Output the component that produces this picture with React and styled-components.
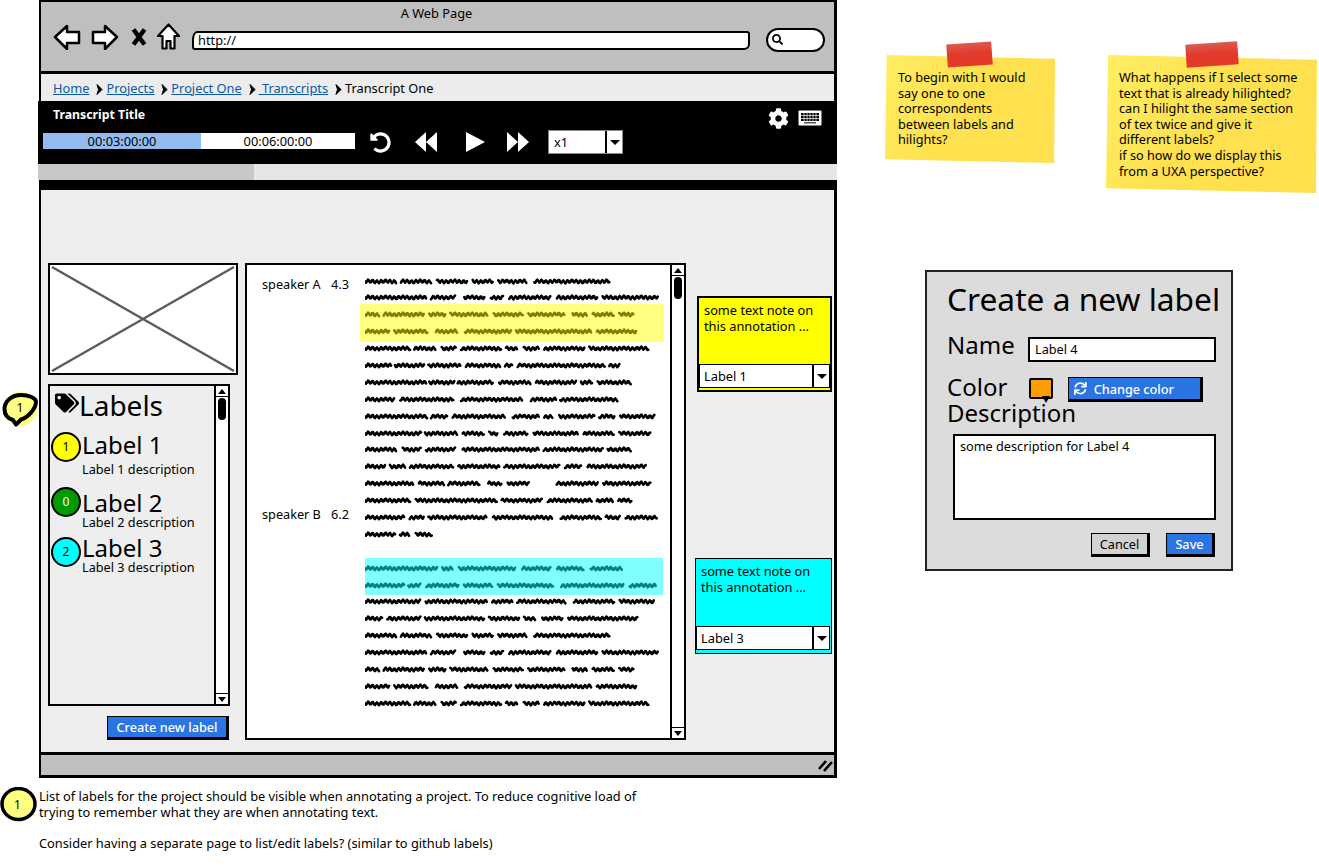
import React from 'react';
import styled, { createGlobalStyle } from 'styled-components';
import { FaCog, FaSearch, FaSync, FaTags, FaUndoAlt } from 'react-icons/fa';

const FONT = '"Noto Sans", "Open Sans", sans-serif';

// word extents of each scribbled line, taken from a 3x crop (so divided by 3 when drawn)
const L = {
  a: [0,93,108,198,216,306,323,383,400,486,508,733],
  b: [0,183,198,270,298,360,378,416,433,558,576,698,713,880],
  c: [0,43,56,178,193,243,256,368,386,473,490,600,623,666,683,748,763,808],
  d: [0,73,88,188,213,278,300,438,453,680,696,813],
  e: [0,136,148,213,230,273,288,410,423,458,476,523,538,658,673,853],
  f: [0,78,90,178,190,288,303,406,420,443,458,720,733,763],
  g: [0,183,193,268,278,383,403,496,513,633,648,683,698,798],
  h: [0,88,106,266,288,473,498,573,586,758],
  i: [0,186,198,248,263,420,443,523,538,563,583,688,703,748,766,870],
  j: [0,168,180,278,293,358,373,398,418,488,506,638,656,748,763,858],
  k: [0,93,113,168,183,270,293,523,536,713,728,798],
  l: [0,60,75,120,135,265,280,405,418,585,600,650,668,843],
  m: [0,145,162,238,250,345,370,410,428,492,575,700,715,858],
  n: [0,137,152,395,410,530,548,680,695,745,760,800],
  o: [0,117,134,177,190,367,384,562,587,707,722,765,782,877],
  p: [0,92,105,132,152,202],
  q: [0,217,232,262,282,452,472,557,577,657,677,772],
  r: [0,117,130,167,184,282,297,382,399,564,589,777,794,872],
  s: [0,167,182,367,382,442,457,602,627,747,764,867],
  t: [0,52,67,167,180,357,372,462,477,512,532,592,610,820],
};

const wavePath = (points) => {
  let d = '';
  for (let i = 0; i < points.length; i += 2) {
    const from = points[i] / 3;
    const to = points[i + 1] / 3;
    for (let x = from; x <= to; x += 1) {
      const y = 8.5 + Math.sin(x * 1.45) * 1.5 - Math.sin(x * 0.37) * 0.4;
      d += `${x === from ? 'M' : 'L'}${x.toFixed(1)} ${y.toFixed(1)}`;
    }
  }
  return d;
};

const Global = createGlobalStyle`
  html, body { margin: 0; padding: 0; background: #fff; }
  body { font-family: ${FONT}; font-size: 12.8px; color: #000; overflow: hidden; }
  * { box-sizing: border-box; }
`;

const Canvas = styled.div`
  display: flex;
  width: 1319px;
  height: 867px;
  padding-left: 39px;
`;

const LeftColumn = styled.div`
  position: relative;
  width: 798px;
`;

const RightColumn = styled.div`
  display: flex;
  flex-direction: column;
  margin-left: 48px;
`;

const Browser = styled.div`
  width: 798px;
  height: 778px;
  border: 3px solid #000;
  border-width: 2px 3px 3px 2px;
  display: flex;
  flex-direction: column;
`;

const TopBar = styled.div`
  height: 72px;
  flex: none;
  background: #bfbfbf;
  border-bottom: 3px solid #000;
  display: flex;
  flex-direction: column;
`;

const PageTitle = styled.div`
  text-align: center;
  font-size: 12.8px;
  line-height: 18px;
  margin-top: 2px;
  padding-right: 2px;
`;

const NavRow = styled.div`
  display: flex;
  align-items: center;
  height: 27px;
  padding-left: 12px;
  margin-top: 1px;
`;

const NavIcon = styled.svg`
  flex: none;
  margin-right: ${(p) => p.$gap}px;
`;

const UrlBar = styled.div`
  width: 558px;
  height: 19px;
  background: #fff;
  border: 2.5px solid #000;
  border-radius: 5px 3px 6px 3px / 9px 3px 6px 3px;
  font-size: 12.8px;
  line-height: 14px;
  padding-left: 4px;
  margin: 7px 16px 0 0;
`;

const SearchPill = styled.div`
  width: 59px;
  height: 24px;
  background: #fff;
  border: 2.5px solid #000;
  border-radius: 12px;
  display: flex;
  align-items: center;
  padding-left: 4px;
  margin-top: 6px;
  font-size: 11px;
`;

const Breadcrumbs = styled.div`
  height: 27px;
  flex: none;
  background: #ececec;
  display: flex;
  align-items: center;
  padding-left: 12px;
  font-size: 12.8px;
  white-space: pre;
`;

const Crumb = styled.a`
  color: #0b5aa5;
  text-decoration: underline;
`;

const Chevron = styled.svg`
  margin: 3px 3px 0 7px;
  flex: none;
`;

const Player = styled.div`
  height: 63px;
  flex: none;
  background: #000;
  color: #fff;
  display: flex;
  flex-direction: column;
  margin: 0 -3px;
`;

const PlayerTop = styled.div`
  display: flex;
  align-items: center;
  justify-content: space-between;
  height: 24px;
  margin-top: 1px;
  padding: 0 15px 0 15px;
`;

const TrackTitle = styled.div`
  font-size: 12.3px;
  font-weight: 700;
  margin-top: 1px;
`;

const PlayerTools = styled.div`
  display: flex;
  align-items: center;
  gap: 9px;
  margin-top: 8px;
  font-size: 21px;
`;

const PlayerControls = styled.div`
  display: flex;
  align-items: center;
  padding-left: 5px;
  margin-top: 4px;
`;

const TimeCell = styled.div`
  width: ${(p) => p.$width}px;
  height: 16px;
  background: ${(p) => p.$bg};
  color: #000;
  font-size: 12.8px;
  line-height: 16px;
  text-align: center;
  margin-bottom: 2px;
`;

const ControlIcon = styled.svg`
  flex: none;
  margin-right: ${(p) => p.$gap}px;
`;

const UndoWrap = styled.div`
  display: flex;
  font-size: 21px;
  margin: 0 23px 0 15px;
`;

const SelectBox = styled.div`
  width: ${(p) => p.$width}px;
  height: 24px;
  flex: none;
  display: flex;
  background: #fff;
  color: #000;
  font-size: 12.8px;
  line-height: 22px;
  border: ${(p) => p.$frame};
`;

const SelectValue = styled.div`
  flex: 1;
  padding-left: ${(p) => p.$pad}px;
`;

const SelectArrow = styled.div`
  width: 17px;
  flex: none;
  border-left: 2px solid #000;
  display: flex;
  align-items: center;
  justify-content: center;
  &::after {
    content: '';
    border-left: 5px solid transparent;
    border-right: 5px solid transparent;
    border-top: 5px solid #000;
  }
`;

const ProgressStrip = styled.div`
  height: 16px;
  flex: none;
  margin: 0 -3px;
  background: #e6e6e6;
  display: flex;
`;

const ProgressFill = styled.div`
  width: 216px;
  background: #c8c8c8;
`;

const BlackRule = styled.div`
  height: 10px;
  flex: none;
  background: #000;
`;

const Content = styled.div`
  height: 562px;
  flex: none;
  background: #eeeeee;
  display: flex;
  padding: 73px 0 12px 7px;
`;

const SideColumn = styled.div`
  width: 190px;
  flex: none;
  display: flex;
  flex-direction: column;
`;

const Placeholder = styled.svg`
  display: block;
  width: 190px;
  height: 112px;
  flex: none;
  background: #fff;
  border: 2.5px solid #000;
`;

const LabelsPanel = styled.div`
  width: 182px;
  height: 322px;
  margin-top: 9px;
  flex: none;
  border: 2.5px solid #000;
  display: flex;
`;

const LabelsBody = styled.div`
  flex: 1;
  padding: 0 0 0 1px;
`;

const LabelsHead = styled.div`
  display: flex;
  align-items: center;
  font-size: 28px;
  line-height: 38px;
  padding-left: 4px;
  svg { font-size: 24px; margin-bottom: 4px; }
`;

const LabelRow = styled.div`
  display: flex;
  margin-top: ${(p) => p.$top}px;
`;

const Dot = styled.div`
  width: 30px;
  height: 30px;
  flex: none;
  border-radius: 50%;
  border: 2px solid #000;
  background: ${(p) => p.$bg};
  color: ${(p) => p.$fg};
  font-size: 12px;
  line-height: 26px;
  text-align: center;
  margin: ${(p) => p.$top}px 1px 0 0;
`;

const LabelName = styled.div`
  font-size: 24px;
  line-height: ${(p) => p.$height}px;
`;

const LabelDesc = styled.div`
  font-size: 12.7px;
  line-height: 17px;
  margin-top: ${(p) => p.$top}px;
`;

const Scrollbar = styled.div`
  width: 14px;
  flex: none;
  background: #fff;
  border-left: 2px solid #000;
  display: flex;
  flex-direction: column;
`;

const ScrollButton = styled.div`
  height: 11px;
  flex: none;
  display: flex;
  align-items: center;
  justify-content: center;
  border: 1.5px solid #000;
  border-width: ${(p) => (p.$down ? '1.5px 0 0 0' : '0 0 1.5px 0')};
  margin-top: ${(p) => (p.$down ? 'auto' : '0')};
  &::after {
    content: '';
    border-left: 4px solid transparent;
    border-right: 4px solid transparent;
    ${(p) => (p.$down ? 'border-top' : 'border-bottom')}: 5px solid #000;
  }
`;

const ScrollThumb = styled.div`
  width: 8px;
  height: 22px;
  border-radius: 4px;
  background: #000;
  margin: 1px 0 0 2px;
`;

const PrimaryButton = styled.div`
  display: flex;
  align-items: center;
  gap: 7px;
  height: ${(p) => p.$height}px;
  width: ${(p) => p.$width}px;
  margin-top: ${(p) => p.$top || 0}px;
  background: #2b75e2;
  color: #fff;
  font-size: 12.7px;
  font-weight: 500;
  justify-content: ${(p) => (p.$start ? 'flex-start' : 'center')};
  padding-left: ${(p) => (p.$start ? 5 : 0)}px;
  border: 1.5px solid #000;
  border-right-width: 3px;
  border-bottom-width: 3px;
  flex: none;
`;

const CreateRow = styled.div`
  display: flex;
  justify-content: flex-end;
  width: 181px;
  margin-top: 10px;
`;

const TranscriptPanel = styled.div`
  width: 441px;
  height: 477px;
  margin-left: 7px;
  flex: none;
  display: flex;
  background: #fff;
  border: 2.5px solid #000;
`;

const TranscriptBody = styled.div`
  flex: 1;
  display: flex;
`;

const SpeakerColumn = styled.div`
  width: 118px;
  flex: none;
  padding: 9px 0 0 15px;
`;

const SpeakerTag = styled.div`
  display: flex;
  justify-content: space-between;
  width: 87px;
  font-size: 12.7px;
  line-height: 18px;
  margin-top: ${(p) => p.$top}px;
`;

const TextColumn = styled.div`
  flex: 1;
  padding-top: 7.5px;
`;

const ScribbleLine = styled.svg`
  display: block;
  width: 304px;
  height: 16.9px;
  margin-bottom: ${(p) => p.$after}px;
`;

const Highlight = styled.div`
  width: ${(p) => p.$width}px;
  padding: 2px 0 2px ${(p) => p.$pad}px;
  margin: -2px 0 -2px ${(p) => p.$left}px;
  background: ${(p) => p.$bg};
`;

const NoteColumn = styled.div`
  flex: 1;
  display: flex;
  flex-direction: column;
  align-items: flex-end;
  padding-right: 2px;
`;

const Note = styled.div`
  width: ${(p) => p.$width}px;
  height: 96px;
  flex: none;
  margin-top: ${(p) => p.$top}px;
  background: ${(p) => p.$bg};
  border: ${(p) => p.$border} solid #000;
  display: flex;
  flex-direction: column;
  font-size: 12.8px;
  line-height: 16px;
`;

const NoteText = styled.div`
  flex: 1;
  padding: 4px 0 0 5px;
`;

const NoteSelect = styled.div`
  padding: 0 0 2px 0;
  margin-bottom: ${(p) => p.$bottom}px;
`;

const BottomBar = styled.div`
  height: 23px;
  flex: none;
  background: #bfbfbf;
  border-top: 3px solid #000;
  display: flex;
  justify-content: flex-end;
  align-items: center;
  padding-right: 1px;
`;

const Annotation = styled.svg`
  position: absolute;
  left: -39px;
  top: 389px;
`;

const Footnote = styled.div`
  position: relative;
  margin: 11px 0 0 0;
  width: 620px;
  font-size: 12.8px;
  line-height: 15.6px;
`;

const FootnoteMark = styled.svg`
  position: absolute;
  left: -39px;
  top: -2px;
`;

const FootnotePara = styled.p`
  margin: 0 0 15.6px 0;
`;

const StickyRow = styled.div`
  display: flex;
  margin-top: 55px;
  align-items: flex-start;
`;

const Sticky = styled.div`
  position: relative;
  width: ${(p) => p.$width}px;
  height: ${(p) => p.$height}px;
  margin-right: ${(p) => p.$gap}px;
  padding: 15px 0 0 13px;
  font-size: 12.7px;
  line-height: 15.6px;
  white-space: pre-line;
  isolation: isolate;
  &::before {
    content: '';
    position: absolute;
    inset: 0;
    z-index: -1;
    background: linear-gradient(120deg, #ffee63 0%, #ffe150 45%, #ffe04e 100%);
    clip-path: polygon(1% 0, 100% 3.5%, 99.5% 100%, 0 96.5%);
  }
`;

const Tape = styled.div`
  position: absolute;
  top: -12px;
  left: ${(p) => p.$left}px;
  width: ${(p) => p.$width}px;
  height: 23px;
  background: linear-gradient(180deg, #dc5a50 0%, #e23b2c 45%, #e5382a 100%);
  transform: rotate(-4deg);
`;

const Dialog = styled.div`
  width: 308px;
  height: 301px;
  margin: 77px 0 0 40px;
  background: #dcdcdc;
  border: 2.5px solid #222;
  padding: 7px 15px 0 20px;
  display: flex;
  flex-direction: column;
`;

const DialogTitle = styled.div`
  font-size: 31.7px;
  line-height: 40px;
  white-space: nowrap;
`;

const FieldLabel = styled.div`
  font-size: 24px;
  line-height: ${(p) => p.$line}px;
  width: ${(p) => p.$width}px;
  flex: none;
`;

const FieldRow = styled.div`
  display: flex;
  align-items: flex-start;
  margin-top: ${(p) => p.$top}px;
`;

const TextInput = styled.div`
  width: 190px;
  height: 25px;
  margin-top: 7px;
  background: #fff;
  border: 2.5px solid #000;
  font-size: 12.7px;
  line-height: 20px;
  padding-left: 5px;
`;

const Swatch = styled.div`
  position: relative;
  width: 24px;
  height: 21px;
  margin: 3px 15px 0 0;
  background: #ff9d00;
  border: 2px solid #000;
  border-radius: 2px;
  &::after {
    content: '';
    position: absolute;
    right: 1px;
    bottom: -6px;
    border-left: 4px solid transparent;
    border-right: 4px solid transparent;
    border-top: 7px solid #000;
  }
`;

const TextArea = styled.div`
  width: 263px;
  height: 86px;
  margin: 10px 0 0 6px;
  background: #fff;
  border: 2.5px solid #000;
  font-size: 12.7px;
  line-height: 16px;
  padding: 2px 0 0 5px;
`;

const DialogActions = styled.div`
  display: flex;
  justify-content: flex-end;
  gap: 16px;
  margin: 13px 1px 0 0;
`;

const GhostButton = styled.div`
  width: 59px;
  height: 24px;
  background: #d2d2d2;
  font-size: 12.7px;
  line-height: 20px;
  text-align: center;
  border: 1.5px solid #000;
  border-right-width: 3px;
  border-bottom-width: 3px;
`;

const Arrow = ({ flip, gap }) => (
  <NavIcon width="28" height="26" viewBox="0 0 28 26" $gap={gap}>
    <polygon
      points={flip ? '26,13 14,2 14,8 2,8 2,19 14,19 14,25' : '2,13 14,2 14,8 26,8 26,19 14,19 14,25'}
      fill="#fff"
      stroke="#000"
      strokeWidth="2.5"
      strokeLinejoin="round"
    />
  </NavIcon>
);

const TriangleButton = ({ flip, gap }) => (
  <ControlIcon width="24" height="22" viewBox="0 0 24 22" $gap={gap}>
    <g fill="#fff" transform={flip ? 'translate(24 0) scale(-1 1)' : undefined}>
      <polygon points="1,11 12,1 12,21" />
      <polygon points="12,11 23,1 23,21" />
    </g>
  </ControlIcon>
);

const CrumbArrow = () => (
  <Chevron width="7" height="11" viewBox="0 0 7 11">
    <path d="M1 0.5L6 5.5L1 10.5L2.5 5.5Z" fill="#000" stroke="#000" />
  </Chevron>
);

const Keyboard = () => (
  <svg width="24" height="16" viewBox="0 0 24 16">
    <rect x="0.5" y="0.5" width="23" height="15" fill="#fff" rx="1" />
    <rect x="3" y="3" width="18" height="8" fill="#000" />
    <path d="M3 5.5h18M3 8.5h18M6 3v8M9 3v8M12 3v8M15 3v8M18 3v8" stroke="#fff" strokeWidth="0.7" />
    <rect x="6" y="12" width="12" height="1.5" fill="#555" />
  </svg>
);

const ScrollBarParts = () => (
  <Scrollbar>
    <ScrollButton />
    <ScrollThumb />
    <ScrollButton $down />
  </Scrollbar>
);

const Scribble = ({ words, color = '#000', after = 0 }) => (
  <ScribbleLine viewBox="0 0 304 17" preserveAspectRatio="none" $after={after}>
    <path d={wavePath(words)} fill="none" stroke={color} strokeWidth="2.6" strokeLinecap="round" strokeLinejoin="round" />
  </ScribbleLine>
);

const labels = [
  { name: 'Label 1', count: 1, bg: '#ffff00', fg: '#000', desc: 'Label 1 description', rowTop: 7, dotTop: 1, nameHeight: 28, descTop: 2 },
  { name: 'Label 2', count: 0, bg: '#009900', fg: '#fff', desc: 'Label 2 description', rowTop: 14, dotTop: -5, nameHeight: 22, descTop: 0 },
  { name: 'Label 3', count: 2, bg: '#00ffff', fg: '#000', desc: 'Label 3 description', rowTop: 6, dotTop: 0, nameHeight: 22, descTop: 0 },
];

export default function App() {
  return (
    <Canvas>
      <Global />
      <LeftColumn>
        <Browser>
          <TopBar>
            <PageTitle>A Web Page</PageTitle>
            <NavRow>
              <Arrow gap={10} />
              <Arrow flip gap={12} />
              <NavIcon width="16" height="20" viewBox="0 0 16 20" $gap={10}>
                <path d="M2.5 2.5L13.5 17.5M13.5 2.5L2.5 17.5" stroke="#000" strokeWidth="4.5" />
              </NavIcon>
              <NavIcon width="23" height="27" viewBox="0 0 23 27" $gap={12}>
                <path d="M11.5 1.5L22 13H17.5V25.5H13.5V18H9.5V25.5H5.5V13H1Z" fill="#fff" stroke="#000" strokeWidth="2.2" strokeLinejoin="round" />
              </NavIcon>
              <UrlBar>http://</UrlBar>
              <SearchPill><FaSearch /></SearchPill>
            </NavRow>
          </TopBar>
          <Breadcrumbs>
            <Crumb>Home</Crumb>
            <CrumbArrow />
            <Crumb>Projects</Crumb>
            <CrumbArrow />
            <Crumb>Project One</Crumb>
            <CrumbArrow />
            <Crumb> Transcripts</Crumb>
            <CrumbArrow />
            <span>Transcript One</span>
          </Breadcrumbs>
          <Player>
            <PlayerTop>
              <TrackTitle>Transcript Title</TrackTitle>
              <PlayerTools>
                <FaCog />
                <Keyboard />
              </PlayerTools>
            </PlayerTop>
            <PlayerControls>
              <TimeCell $width={158} $bg="#92bbf0">00:03:00:00</TimeCell>
              <TimeCell $width={154} $bg="#fff">00:06:00:00</TimeCell>
              <UndoWrap><FaUndoAlt /></UndoWrap>
              <TriangleButton gap={27} />
              <ControlIcon width="21" height="22" viewBox="0 0 21 22" $gap={20}>
                <polygon points="1,1 20,11 1,21" fill="#fff" />
              </ControlIcon>
              <TriangleButton flip gap={18} />
              <SelectBox $width={75} $frame="1px solid #888">
                <SelectValue $pad={5}>x1</SelectValue>
                <SelectArrow />
              </SelectBox>
            </PlayerControls>
          </Player>
          <ProgressStrip><ProgressFill /></ProgressStrip>
          <BlackRule />
          <Content>
            <SideColumn>
              <Placeholder viewBox="0 0 185 107" preserveAspectRatio="none">
                <path d="M2 2L183 105M183 2L2 105" stroke="#5c5c5c" strokeWidth="2.5" fill="none" />
              </Placeholder>
              <LabelsPanel>
                <LabelsBody>
                  <LabelsHead><FaTags />Labels</LabelsHead>
                  {labels.map((l) => (
                    <LabelRow key={l.name} $top={l.rowTop}>
                      <Dot $bg={l.bg} $fg={l.fg} $top={l.dotTop}>{l.count}</Dot>
                      <div>
                        <LabelName $height={l.nameHeight}>{l.name}</LabelName>
                        <LabelDesc $top={l.descTop}>{l.desc}</LabelDesc>
                      </div>
                    </LabelRow>
                  ))}
                </LabelsBody>
                <ScrollBarParts />
              </LabelsPanel>
              <CreateRow>
                <PrimaryButton $width={122} $height={24}>Create new label</PrimaryButton>
              </CreateRow>
            </SideColumn>
            <TranscriptPanel>
              <TranscriptBody>
                <SpeakerColumn>
                  <SpeakerTag $top={1}><span>speaker A</span><span>4.3</span></SpeakerTag>
                  <SpeakerTag $top={212}><span>speaker B</span><span>6.2</span></SpeakerTag>
                </SpeakerColumn>
                <TextColumn>
                  <Scribble words={L.a} />
                  <Scribble words={L.b} />
                  <Highlight $bg="#ffff80" $left={-5} $width={304} $pad={5}>
                    <Scribble words={L.c} color="#808000" />
                    <Scribble words={L.d} color="#808000" />
                  </Highlight>
                  <Scribble words={L.e} />
                  <Scribble words={L.f} />
                  <Scribble words={L.g} />
                  <Scribble words={L.h} />
                  <Scribble words={L.i} />
                  <Scribble words={L.j} />
                  <Scribble words={L.k} />
                  <Scribble words={L.l} />
                  <Scribble words={L.m} />
                  <Scribble words={L.n} />
                  <Scribble words={L.o} />
                  <Scribble words={L.p} after={16.9} />
                  <Highlight $bg="#80ffff" $left={0} $width={298} $pad={0}>
                    <Scribble words={L.q} color="#008080" />
                    <Scribble words={L.r} color="#008080" />
                  </Highlight>
                  <Scribble words={L.s} />
                  <Scribble words={L.t} />
                  <Scribble words={L.a} />
                  <Scribble words={L.b} />
                  <Scribble words={L.c} />
                  <Scribble words={L.d} />
                  <Scribble words={L.e} />
                </TextColumn>
              </TranscriptBody>
              <ScrollBarParts />
            </TranscriptPanel>
            <NoteColumn>
              <Note $width={135} $top={33} $bg="#ffff00" $border="2.5px">
                <NoteText>some text note on<br />this annotation ...</NoteText>
                <NoteSelect $bottom={0}>
                  <SelectBox $width={131} $frame="1.5px solid #000">
                    <SelectValue $pad={4}>Label 1</SelectValue>
                    <SelectArrow />
                  </SelectBox>
                </NoteSelect>
              </Note>
              <Note $width={137} $top={166} $bg="#00ffff" $border="1.5px">
                <NoteText>some text note on<br />this annotation ...</NoteText>
                <NoteSelect $bottom={1}>
                  <SelectBox $width={134} $frame="1px solid #000">
                    <SelectValue $pad={4}>Label 3</SelectValue>
                    <SelectArrow />
                  </SelectBox>
                </NoteSelect>
              </Note>
            </NoteColumn>
          </Content>
          <BottomBar>
            <svg width="16" height="13" viewBox="0 0 16 13">
              <path d="M2 10L9 2M7 12L15 3" stroke="#000" strokeWidth="2.6" />
            </svg>
          </BottomBar>
        </Browser>
        <Annotation width="38" height="42" viewBox="0 0 38 42">
          <circle cx="20" cy="20" r="17" fill="#ffff80" />
          <path d="M4.5 20C4.5 12 12 6 21 6C29 6 36 9 36 13C36 20 27 29 21 30.5L16 35.5L13 31C8 29.5 4.5 26 4.5 20Z" fill="#ffff80" stroke="#000" strokeWidth="4" strokeLinejoin="round" />
          <text x="20" y="23" fontSize="12" textAnchor="middle" fontFamily="Noto Sans">1</text>
        </Annotation>
        <Footnote>
          <FootnoteMark width="38" height="36" viewBox="0 0 38 36">
            <ellipse cx="18.5" cy="17" rx="16.5" ry="15.5" fill="#ffff80" stroke="#000" strokeWidth="3.5" />
            <text x="17.5" y="22" fontSize="12" textAnchor="middle" fontFamily="Noto Sans">1</text>
          </FootnoteMark>
          <FootnotePara>List of labels for the project should be visible when annotating a project. To reduce cognitive load of trying to remember what they are when annotating text.</FootnotePara>
          <FootnotePara>Consider having a separate page to list/edit labels? (similar to github labels)</FootnotePara>
        </Footnote>
      </LeftColumn>
      <RightColumn>
        <StickyRow>
          <Sticky $width={170} $height={108} $gap={51}>
            <Tape $left={62} $width={45} />
            {'To begin with I would\nsay one to one\ncorrespondents\nbetween labels and\nhilights?'}
          </Sticky>
          <Sticky $width={211} $height={138} $gap={0}>
            <Tape $left={80} $width={52} />
            {'What happens if I select some\ntext that is already hilighted?\ncan I hilight the same section\nof tex twice and give it\ndifferent labels?\nif so how do we display this\nfrom a UXA perspective?'}
          </Sticky>
        </StickyRow>
        <Dialog>
          <DialogTitle>Create a new label</DialogTitle>
          <FieldRow $top={11}>
            <FieldLabel $width={81} $line={30}>Name</FieldLabel>
            <TextInput>Label 4</TextInput>
          </FieldRow>
          <FieldRow $top={13}>
            <FieldLabel $width={82} $line={24}>Color</FieldLabel>
            <Swatch />
            <PrimaryButton $width={135} $height={25} $top={2} $start><FaSync />Change color</PrimaryButton>
          </FieldRow>
          <FieldLabel $width={200} $line={22}>Description</FieldLabel>
          <TextArea>some description for Label 4</TextArea>
          <DialogActions>
            <GhostButton>Cancel</GhostButton>
            <PrimaryButton $width={49} $height={24}>Save</PrimaryButton>
          </DialogActions>
        </Dialog>
      </RightColumn>
    </Canvas>
  );
}
